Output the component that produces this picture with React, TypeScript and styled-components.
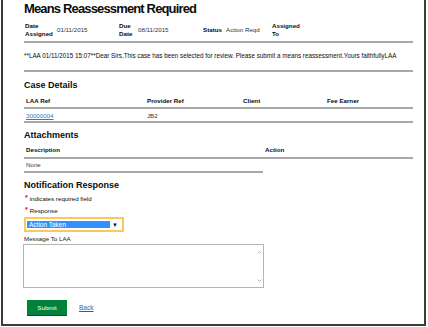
import React from 'react'
import styled, { createGlobalStyle } from 'styled-components'

let GlobalStyle = createGlobalStyle`
	html, body {
		margin: 0;
		padding: 0;
		background: #fff;
	}
	body {
		font-family: "Liberation Sans", Arial, sans-serif;
		color: #0b0c0c;
	}
`

let Frame = styled.div`
	box-sizing: border-box;
	width: 425px;
	margin-left: 1px;
	padding: 0 12px 9px 21px;
	border: 2px solid #3c3c3c;
	border-top: none;
`

let Content = styled.div`
	width: 389px;
`

let Title = styled.h1`
	margin: 0;
	padding-top: 1px;
	font-size: 13px;
	line-height: 16px;
	font-weight: 700;
	letter-spacing: -0.85px;
`

let Summary = styled.div`
	display: grid;
	grid-template-columns: 32px 62px 19px 65px 23px 46px auto;
	align-items: center;
	margin-top: 4px;
	padding: 1px 0 4px 1px;
	border-bottom: 2px solid #a7a7a7;
`

let Label = styled.div`
	font-size: 6.2px;
	line-height: 7.5px;
	font-weight: 700;
`

let Value = styled.div`
	font-size: 6.2px;
	line-height: 7.5px;
	color: #333;
`

let Message = styled.p`
	margin: 0;
	padding: 9px 0 10px;
	font-size: 6.3px;
	line-height: 8px;
	border-bottom: 2px solid #a7a7a7;
`

let Heading = styled.h2<{ top?: number }>`
	margin: ${p => p.top ?? 7}px 0 0;
	font-size: 9px;
	line-height: 11px;
	font-weight: 700;
`

let Table = styled.table<{ top: number }>`
	width: 100%;
	table-layout: fixed;
	border-spacing: 0;
	margin-top: ${p => p.top}px;
	font-size: 6.2px;
	line-height: 8px;
`

let Th = styled.th<{ pad: string }>`
	text-align: left;
	font-weight: 700;
	padding: ${p => p.pad};
	border-bottom: 2px solid #a7a7a7;
`

let Td = styled.td<{ pad: string }>`
	padding: ${p => p.pad};
	border-bottom: 2px solid #a7a7a7;
	color: #333;
`

let RefLink = styled.a`
	color: #2e7bc4;
	text-decoration: underline;
`

let Hint = styled.div<{ top: number }>`
	margin-top: ${p => p.top}px;
	font-size: 6.2px;
	line-height: 8px;
	display: flex;
	align-items: center;
	gap: 2px;
	padding-left: 1px;
`

let Star = styled.span`
	color: #c0141f;
	font-size: 7px;
	font-weight: 700;
	position: relative;
	top: -1px;
`

let Select = styled.div`
	box-sizing: border-box;
	margin-top: 2px;
	width: 100px;
	height: 15px;
	display: flex;
	align-items: center;
	padding: 0 4px 0 1px;
	border: 2px solid #fbc760;
	background: #fff;
`

let Selected = styled.span`
	width: 81px;
	height: 7px;
	display: flex;
	align-items: center;
	padding-left: 2px;
	background: #3390ff;
	color: #fff;
	font-size: 6.5px;
`

let Arrow = styled.span`
	margin-left: auto;
	font-size: 6px;
	color: #111;
`

let FieldLabel = styled.div`
	margin-top: 3px;
	font-size: 6.2px;
	line-height: 8px;
	color: #222;
`

let TextArea = styled.div`
	box-sizing: border-box;
	margin: 1px 0 0 -1px;
	width: 241px;
	height: 44px;
	border: 1px solid #b4b4b4;
	display: flex;
	justify-content: flex-end;
`

let ScrollBar = styled.div`
	width: 7px;
	display: flex;
	flex-direction: column;
	justify-content: space-between;
	align-items: center;
	padding: 6px 0 5px;
	color: #9a9a9a;
`

let Actions = styled.div`
	margin-top: 12px;
	padding-left: 3px;
	display: flex;
	align-items: center;
	gap: 12px;
`

let SubmitButton = styled.button`
	width: 40px;
	height: 15px;
	padding: 0;
	border: none;
	background: #00823b;
	box-shadow: 0 1px 0 #00551f;
	color: #fff;
	font-family: "Liberation Sans", Arial, sans-serif;
	font-size: 6.2px;
`

let BackLink = styled.a`
	color: #1f5fae;
	text-decoration: underline;
	font-size: 6.5px;
`

function Chevron({ up }: { up?: boolean }) {
	return (
		<svg width="5" height="3" viewBox="0 0 5 3">
			<path d={up ? 'M0.5 2.5 L2.5 0.5 L4.5 2.5' : 'M0.5 0.5 L2.5 2.5 L4.5 0.5'} fill="none" stroke="currentColor" strokeWidth="0.7" />
		</svg>
	)
}

export default function App() {
	return (
		<>
			<GlobalStyle />
			<Frame>
				<Content>
					<Title>Means Reassessment Required</Title>

					<Summary>
						<Label>Date<br />Assigned</Label>
						<Value>01/11/2015</Value>
						<Label>Due<br />Date</Label>
						<Value>08/11/2015</Value>
						<Label>Status</Label>
						<Value>Action Reqd</Value>
						<Label>Assigned<br />To</Label>
					</Summary>

					<Message>
						**LAA 01/11/2015 15:07**Dear Sirs,This case has been selected for review. Please submit a means reassessment.Yours faithfullyLAA
					</Message>

					<Heading top={8}>Case Details</Heading>
					<Table top={6}>
						<colgroup>
							<col style={{ width: 121 }} />
							<col style={{ width: 96 }} />
							<col style={{ width: 84 }} />
							<col />
						</colgroup>
						<thead>
							<tr>
								<Th pad="0 2px 2px">LAA Ref</Th>
								<Th pad="0 2px 2px">Provider Ref</Th>
								<Th pad="0 2px 2px">Client</Th>
								<Th pad="0 2px 2px">Fee Earner</Th>
							</tr>
						</thead>
						<tbody>
							<tr>
								<Td pad="3px 2px 1px"><RefLink href="#">30000004</RefLink></Td>
								<Td pad="3px 2px 1px">JB2</Td>
								<Td pad="3px 2px 1px"></Td>
								<Td pad="3px 2px 1px"></Td>
							</tr>
						</tbody>
					</Table>

					<Heading>Attachments</Heading>
					<Table top={5}>
						<colgroup>
							<col style={{ width: 239 }} />
							<col />
						</colgroup>
						<thead>
							<tr>
								<Th pad="0 2px 3px">Description</Th>
								<Th pad="0 2px 3px">Action</Th>
							</tr>
						</thead>
						<tbody>
							<tr>
								<Td pad="1.5px 2px 2.5px">None</Td>
							</tr>
						</tbody>
					</Table>

					<Heading>Notification Response</Heading>
					<Hint top={4}><Star>*</Star>indicates required field</Hint>
					<Hint top={4}><Star>*</Star>Response</Hint>
					<Select>
						<Selected>Action Taken</Selected>
						<Arrow>▼</Arrow>
					</Select>

					<FieldLabel>Message To LAA</FieldLabel>
					<TextArea>
						<ScrollBar>
							<Chevron up />
							<Chevron />
						</ScrollBar>
					</TextArea>

					<Actions>
						<SubmitButton>Submit</SubmitButton>
						<BackLink href="#">Back</BackLink>
					</Actions>
				</Content>
			</Frame>
		</>
	)
}
